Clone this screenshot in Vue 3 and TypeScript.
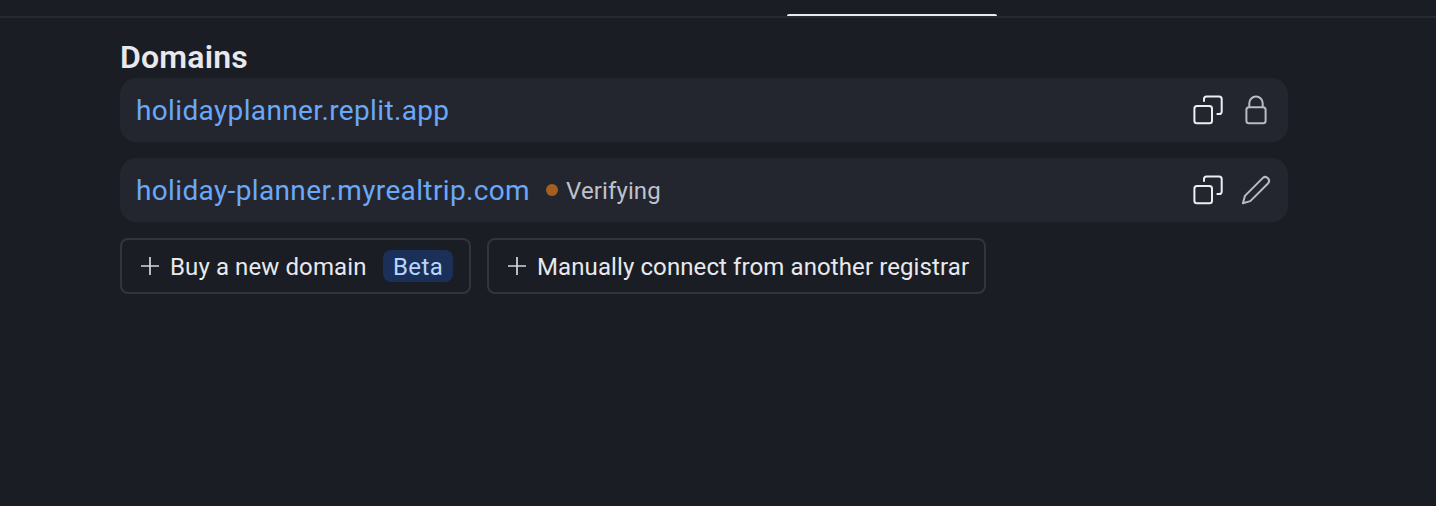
<script setup lang="ts">
interface Domain {
  name: string
  status?: string
  action: 'lock' | 'edit'
}

const domains: Domain[] = [
  { name: 'holidayplanner.replit.app', action: 'lock' },
  { name: 'holiday-planner.myrealtrip.com', status: 'Verifying', action: 'edit' },
]
</script>

<template>
  <div class="page">
    <nav class="tabs"><span class="active-tab"></span></nav>
    <main class="content">
      <h1>Domains</h1>
      <ul class="domains">
        <li v-for="d in domains" :key="d.name" class="domain">
          <a class="link">{{ d.name }}</a>
          <span v-if="d.status" class="status"><i class="dot"></i><span class="status-text">{{ d.status }}</span></span>
          <span class="actions">
            <svg class="icon bright" viewBox="0 0 32 32">
              <rect x="2.4" y="12" width="17.6" height="17.3" rx="2.6" />
              <path d="M12 7.8V5A2.6 2.6 0 0 1 14.6 2.4H27.1A2.6 2.6 0 0 1 29.7 5V17.4A2.6 2.6 0 0 1 27.1 20H24.6" />
            </svg>
            <svg v-if="d.action === 'lock'" class="icon" viewBox="0 0 32 32">
              <rect x="6.4" y="13.2" width="19.2" height="16.1" rx="2.6" />
              <path d="M9.3 13.2V9.3A6.7 6.7 0 0 1 22.7 9.3V13.2" />
            </svg>
            <svg v-else class="icon" viewBox="0 0 32 32">
              <path d="M22.9 3.9A3.77 3.77 0 0 1 28.2 9.2L10.3 27.1L2.9 29.2L4.9 21.9Z" />
            </svg>
          </span>
        </li>
      </ul>
      <div class="buttons">
        <button class="buy" type="button">
          <svg class="plus" viewBox="0 0 20 20"><path d="M10 1V19M1 10H19" /></svg>
          <span class="label">Buy a new domain</span>
          <span class="badge">Beta</span>
        </button>
        <button class="connect" type="button">
          <svg class="plus" viewBox="0 0 20 20"><path d="M10 1V19M1 10H19" /></svg>
          <span class="label">Manually connect from another registrar</span>
        </button>
      </div>
    </main>
  </div>
</template>

<style>
body {
  background: #1b1d24;
}
</style>

<style scoped>
.page {
  height: 506px;
  overflow: hidden;
  background: #1b1d24;
  color: #e8e9ee;
  font-family: Roboto, "Liberation Sans", sans-serif;
}
.tabs {
  box-sizing: border-box;
  height: 18px;
  padding: 14px 0 0 787px;
  border-bottom: 2px solid #262932;
}
.active-tab {
  display: block;
  width: 210px;
  height: 2px;
  border-radius: 2px 2px 0 0;
  background: #e8ebf1;
}
.content {
  width: 1168px;
  margin-left: 120px;
  padding-top: 20px;
}
h1 {
  height: 40px;
  margin: 0;
  font-size: 32px;
  line-height: 39px;
  font-weight: 600;
  letter-spacing: 0.2px;
}
.domains {
  display: flex;
  flex-direction: column;
  gap: 16px;
  margin: 0;
  padding: 0;
  list-style: none;
}
.domain {
  display: flex;
  align-items: center;
  box-sizing: border-box;
  height: 64px;
  padding: 0 16px;
  border-radius: 16px;
  background: #23262e;
}
.link {
  padding-top: 2px;
  color: #6ba8fa;
  font-size: 28px;
  line-height: 36px;
  letter-spacing: 0.36px;
}
.status {
  display: flex;
  align-items: center;
  gap: 8px;
  margin-left: 16px;
  color: #bfc2ca;
  font-size: 24px;
}
.status-text {
  padding-top: 2px;
  letter-spacing: 0.12px;
}
.dot {
  width: 12px;
  height: 12px;
  border-radius: 50%;
  background: #a65e20;
}
.actions {
  display: flex;
  gap: 16px;
  margin-left: auto;
}
.icon {
  width: 32px;
  height: 32px;
  fill: none;
  stroke: #b9bcc4;
  stroke-width: 2;
  stroke-linejoin: round;
}
.bright {
  stroke: #eceef2;
}
.buttons {
  display: flex;
  gap: 16px;
  margin-top: 16px;
}
button {
  display: flex;
  align-items: center;
  box-sizing: border-box;
  height: 56px;
  padding: 0 0 0 18px;
  border: 2px solid #32353d;
  border-radius: 8px;
  background: transparent;
  color: #e8e9ee;
  font: 400 24px/32px Roboto, "Liberation Sans", sans-serif;
  letter-spacing: 0.1px;
  white-space: nowrap;
}
.label {
  padding-top: 2px;
}
.buy {
  width: 351px;
}
.connect {
  width: 499px;
}
.plus {
  flex: none;
  width: 20px;
  height: 20px;
  margin-right: 10px;
  fill: none;
  stroke: #d5d7dc;
  stroke-width: 1.7;
}
.badge {
  box-sizing: border-box;
  width: 70px;
  height: 32px;
  padding-top: 1px;
  margin: 0 16px 0 auto;
  border-radius: 8px;
  background: #1b3058;
  color: #b8d6fd;
  letter-spacing: 0.4px;
  text-align: center;
}
</style>
